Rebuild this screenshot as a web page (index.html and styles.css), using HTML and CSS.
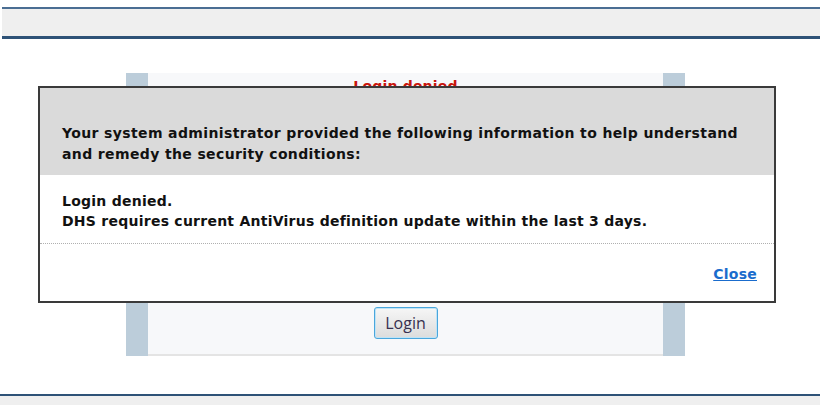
FILE: index.html
```html
<!DOCTYPE html>
<html lang="en">
<head>
<meta charset="utf-8">
<title>Login</title>
<link rel="stylesheet" href="styles.css">
</head>
<body>
  <div class="topbar"></div>

  <div class="panel">
    <div class="panel-side"></div>
    <div class="panel-body">
      <div class="status">Login denied</div>
      <div class="actions">
        <button class="btn" type="button">Login</button>
      </div>
    </div>
    <div class="panel-side"></div>
  </div>

  <div class="bottombar"></div>

  <div class="dialog">
    <div class="dialog-head">
      Your system administrator provided the following information to help understand
      and remedy the security conditions:
    </div>
    <div class="dialog-body">
      Login denied.<br>
      DHS requires current AntiVirus definition update within the last 3 days.
    </div>
    <div class="dialog-foot">
      <a class="close" href="#">Close</a>
    </div>
  </div>
</body>
</html>
```

FILE: styles.css
```css
html, body {
  margin: 0;
  padding: 0;
  background: #ffffff;
  font-family: "DejaVu Sans", "Open Sans", sans-serif;
  width: 820px;
  height: 405px;
  overflow: hidden;
  position: relative;
}

/* header band */
.topbar {
  margin: 7px 0 0 2px;
  height: 27px;
  background: #efefef;
  border-top: 2px solid #4b6e93;
  border-bottom: 3px solid #2e5277;
}

/* login panel */
.panel {
  margin: 34px 0 0 126px;
  width: 559px;
  height: 283px;
  display: grid;
  grid-template-columns: 22px 1fr 22px;
}
.panel-side {
  background: #bccdda;
}
.panel-body {
  background: #f7f8fa;
  border-bottom: 2px solid #e4e4e4;
  display: flex;
  flex-direction: column;
  align-items: center;
}
.status {
  margin-top: 4px;
  color: #c8140c;
  font-weight: 700;
  font-size: 14px;
  letter-spacing: 0.2px;
  line-height: 18px;
}
.actions {
  margin-top: 212px;
}
.btn {
  width: 64px;
  height: 32px;
  border: 1px solid #4aa6dc;
  border-radius: 3px;
  box-shadow: inset 0 0 0 1px #bfe3f6;
  background: linear-gradient(#f6f6f6, #dcdcdc);
  font-family: "Open Sans", "DejaVu Sans", sans-serif;
  font-size: 16px;
  color: #38304f;
  padding: 0;
}

/* footer band */
.bottombar {
  margin-top: 38px;
  height: 10px;
  background: #efefef;
  border-top: 2px solid #2e5277;
}

/* information dialog */
.dialog {
  position: absolute;
  left: 38px;
  top: 86px;
  width: 734px;
  border: 2px solid #3a3a3a;
  background: #ffffff;
  font-weight: 700;
  font-size: 14px;
  letter-spacing: 0.25px;
  color: #111111;
}
.dialog-head {
  background: #dadada;
  padding: 35px 22px 10px;
  line-height: 21px;
  letter-spacing: 0.37px;
}
.dialog-body {
  padding: 16px 22px 12px;
  line-height: 20px;
  border-bottom: 1px dotted #b0b0b0;
}
.dialog-foot {
  height: 57px;
  display: flex;
  justify-content: flex-end;
  align-items: center;
  padding-right: 17px;
}
.close {
  color: #1a6ccd;
  text-decoration: underline;
  font-size: 14px;
  letter-spacing: 0.25px;
  margin-top: 3px;
}
```
